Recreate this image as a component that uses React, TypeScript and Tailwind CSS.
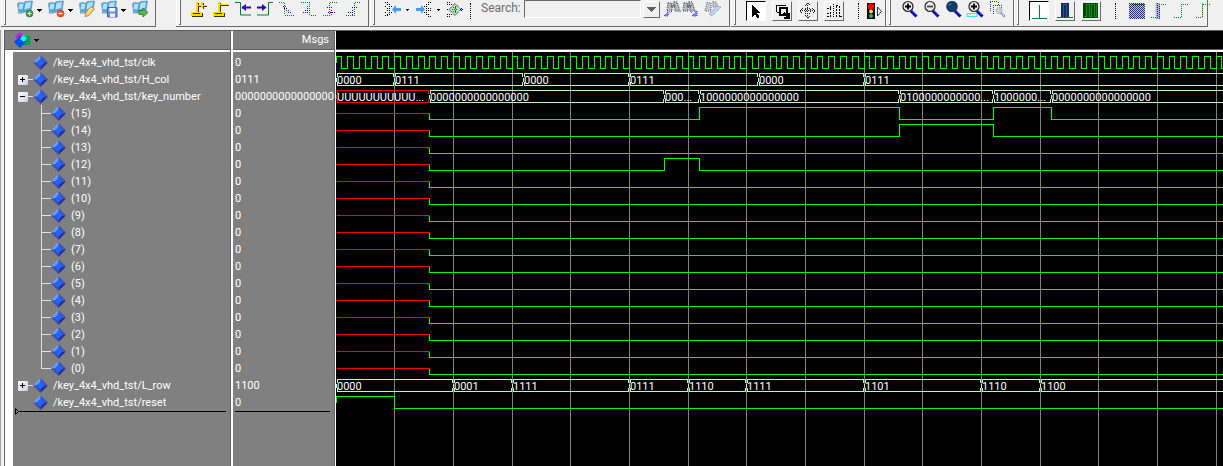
import { useState, type ReactNode } from 'react';
import clsx from 'clsx';

type Level = '0' | '1' | 'U';

interface Signal {
  name: string;
  value: string;
  kind: 'clock' | 'bus' | 'bit';
  depth?: number;
  expander?: '+' | '-';
  // [time, value] pairs, in simulation time units
  changes: [number, string][];
}

const ROW_HEIGHT = 17;
const END_TIME = 4000;

// 3 grid lines every 176px
const toX = (time: number) => Math.floor((time * 176) / 300) + 0.5;

const bitChanges: Record<number, [number, Level][]> = {
  15: [[0, 'U'], [160, '0'], [620, '1'], [960, '0'], [1120, '1'], [1220, '0']],
  14: [[0, 'U'], [160, '0'], [960, '1'], [1120, '0']],
  12: [[0, 'U'], [160, '0'], [560, '1'], [620, '0']],
};

const bits: Signal[] = Array.from({ length: 16 }, (_, i) => 15 - i).map(n => ({
  name: `(${n})`,
  value: '0',
  kind: 'bit',
  depth: 1,
  changes: bitChanges[n] || [[0, 'U'], [160, '0']],
}));

const signals: Signal[] = [
  { name: '/key_4x4_vhd_tst/clk', value: '0', kind: 'clock', changes: [] },
  {
    name: '/key_4x4_vhd_tst/H_col',
    value: '0111',
    kind: 'bus',
    expander: '+',
    changes: [[0, '0000'], [100, '0111'], [320, '0000'], [500, '0111'], [720, '0000'], [900, '0111']],
  },
  {
    name: '/key_4x4_vhd_tst/key_number',
    value: '0000000000000000',
    kind: 'bus',
    expander: '-',
    changes: [
      [0, 'UUUUUUUUUUU...'],
      [160, '0000000000000000'],
      [560, '000...'],
      [620, '1000000000000000'],
      [960, '0100000000000...'],
      [1120, '1000000...'],
      [1220, '0000000000000000'],
    ],
  },
  ...bits,
  {
    name: '/key_4x4_vhd_tst/L_row',
    value: '1100',
    kind: 'bus',
    expander: '+',
    changes: [
      [0, '0000'], [200, '0001'], [300, '1111'], [500, '0111'], [600, '1110'],
      [700, '1111'], [900, '1101'], [1100, '1110'], [1200, '1100'],
    ],
  },
  { name: '/key_4x4_vhd_tst/reset', value: '0', kind: 'bit', changes: [[0, '1'], [100, '0']] },
];

/* ---------- waveforms ---------- */

function ClockTrace({ top }: { top: number }) {
  let d = `M0.5 ${top + 6}V${top}`;
  for (let t = 0; t < END_TIME; t += 20) {
    d += `H${toX(t + 10)}V${top + 12}H${toX(t + 20)}V${top}`;
  }
  return <path d={d} stroke="#00ff00" fill="none" />;
}

function BitTrace({ top, changes }: { top: number; changes: [number, string][] }) {
  const levelY: Record<string, number> = { '1': top, U: top + 6, '0': top + 12 };
  return (
    <>
      {changes.map(([time, level], i) => {
        const end = changes[i + 1]?.[0] ?? END_TIME;
        const from = i > 0 ? levelY[changes[i - 1][1]] : top + 6;
        return (
          <path
            key={time}
            d={`M${toX(time)} ${from}V${levelY[level]}H${toX(end)}`}
            stroke={level === 'U' ? '#ff0000' : '#00ff00'}
            fill="none"
          />
        );
      })}
    </>
  );
}

function BusTrace({ top, changes }: { top: number; changes: [number, string][] }) {
  return (
    <>
      {changes.map(([time, value], i) => {
        const x = toX(time);
        const end = toX(changes[i + 1]?.[0] ?? END_TIME);
        return (
          <g key={time}>
            <path
              d={`M${x} ${top + 4}v4M${x + 1} ${top + 3.5}V${top}H${end - 1}v3.5M${x + 1} ${top + 8.5}V${top + 12}H${end - 1}v-3.5`}
              stroke={value[0] === 'U' ? '#ff0000' : '#b4ffb4'}
              fill="none"
            />
            <text x={x + 0.5} y={top + 10.5} fill="#ffffff" fontSize="11">
              {value}
            </text>
          </g>
        );
      })}
    </>
  );
}

function WavePane() {
  return (
    <svg className="block h-full w-full" shapeRendering="crispEdges" role="img" aria-label="Waveforms">
      {Array.from({ length: END_TIME / 100 }, (_, i) => (
        <rect key={i} x={toX((i + 1) * 100) - 0.5} y="0" width="1" height="100%" fill="#808080" />
      ))}
      {signals.map((signal, i) => {
        const top = 4.5 + i * ROW_HEIGHT;
        if (signal.kind === 'clock') return <ClockTrace key={signal.name} top={top} />;
        if (signal.kind === 'bus') return <BusTrace key={signal.name} top={top} changes={signal.changes} />;
        return <BitTrace key={signal.name} top={top} changes={signal.changes} />;
      })}
    </svg>
  );
}

/* ---------- signal tree ---------- */

function Diamond() {
  return (
    <svg className="h-[15px] w-[15px] shrink-0" viewBox="0 0 15 15">
      <path d="M7.5 0L0 7.5h7.5z" fill="#6f9cf0" />
      <path d="M7.5 0L15 7.5H7.5z" fill="#3a55c4" />
      <path d="M0 7.5L7.5 15V7.5z" fill="#3c50b4" />
      <path d="M15 7.5L7.5 15V7.5z" fill="#2a2a9c" />
      <path d="M7.5 3.5l4 4-4 4-4-4z" fill="#1f66ff" />
    </svg>
  );
}

function SignalRow({ signal, isLast }: { signal: Signal; isLast: boolean }) {
  const [sign, setSign] = useState(signal.expander);

  if (signal.depth) {
    return (
      <li className="flex h-[17px] items-center pl-7">
        <span className="flex h-full w-[10px] shrink-0 flex-col">
          <span className="h-[9px] w-full border-b border-l border-[#e0e0e0]" />
          <span className={clsx('w-full flex-1', !isLast && 'border-l border-[#e0e0e0]')} />
        </span>
        <Diamond />
        <span className="pl-[5px]">{signal.name}</span>
      </li>
    );
  }
  return (
    <li className="flex h-[17px] items-center pl-[5px]">
      {sign ? (
        <>
          <button
            aria-label={`Toggle ${signal.name}`}
            onClick={() => setSign(sign === '+' ? '-' : '+')}
            className="flex h-[10px] w-[10px] items-center justify-center rounded-[1px] bg-gradient-to-br from-white to-[#c4cfe4]"
          >
            <svg className="h-[6px] w-[6px]" viewBox="0 0 6 6" shapeRendering="crispEdges">
              <path d={sign === '+' ? 'M0 2h5v1H0zM2 0h1v5H2z' : 'M0 2h5v1H0z'} fill="#000" />
            </svg>
          </button>
          <span className="h-px w-[5px] bg-[#e0e0e0]" />
        </>
      ) : (
        <span className="w-[15px]" />
      )}
      <Diamond />
      <span className="pl-[5px]">{signal.name}</span>
    </li>
  );
}

/* ---------- toolbar ---------- */

interface IconProps {
  label: string;
  width?: string;
  children: ReactNode;
}

function ToolIcon({ label, width = 'w-4', children }: IconProps) {
  return (
    <button aria-label={label} className={clsx('h-5 shrink-0', width)}>
      <svg className="h-5 w-4 overflow-visible" viewBox="0 0 16 20">
        {children}
      </svg>
    </button>
  );
}

function BoxIcon({ label, pressed, children }: { label: string; pressed?: boolean; children: ReactNode }) {
  return (
    <button
      aria-label={label}
      aria-pressed={!!pressed}
      className={clsx(
        'mt-px h-5 w-5 shrink-0 border',
        pressed
          ? 'border-t-black border-l-black border-r-white border-b-white bg-white'
          : 'border-t-white border-l-white border-r-[#696969] border-b-[#696969] bg-[#f0f0f0]'
      )}
    >
      <svg className="h-[18px] w-[18px]" viewBox="0 0 18 18" shapeRendering="crispEdges">
        {children}
      </svg>
    </button>
  );
}

function Caret({ small }: { small?: boolean }) {
  return (
    <svg className="h-5 w-[5px] shrink-0" viewBox="0 0 5 20" shapeRendering="crispEdges">
      <path d={small ? 'M1 9h3v1H1zM2 10h1v1H2z' : 'M0 9h5v1H0zM1 10h3v1H1zM2 11h1v1H2z'} fill="#000" />
    </svg>
  );
}

function Separator() {
  return <span className="mt-[3px] h-4 w-0 shrink-0 border-l border-dotted border-black" />;
}

function Group({ width, children }: { width: string; children: ReactNode }) {
  return (
    <div className={clsx('flex h-[27px] shrink-0 border-r border-b border-[#696969]', width)}>
      <span className="h-[25px] w-[5px] shrink-0 border-l border-white">
        <span className="ml-[2px] block h-full w-[2px] border-r border-b border-[#696969] bg-white" />
      </span>
      {children}
    </div>
  );
}

function BookBase() {
  return (
    <>
      <path d="M0.5 3.500l2-1 4 .5 2-1.500 7-.5-1.500 9.500-5 1-2 1-5.500-1z" fill="#4aa8e8" stroke="#6c98b8" strokeWidth="0.800" />
      <path d="M2.500 3.500l4 .5-1 5.500-4-.5zM8 3l6-1-1 6-6 1.500z" fill="#b0e2fc" />
      <path d="M8 3L6.500 10M2 11.500l-1 1.500h5" stroke="#5e7f96" strokeWidth="0.800" fill="none" />
    </>
  );
}

function Magnifier({ children }: { children?: ReactNode }) {
  return (
    <>
      <path d="M10 11l5.500 5.500" stroke="#0000c0" strokeWidth="3" />
      <path d="M10.500 10l5 5" stroke="#8090d0" strokeWidth="0.8" />
      <circle cx="7" cy="6.500" r="5" fill="#ececec" stroke="#202020" strokeWidth="1.200" />
      {children}
    </>
  );
}

const dotted = { fill: 'none', strokeDasharray: '1 1', shapeRendering: 'crispEdges' as const };

function FileTools() {
  return (
    <Group width="w-[155px]">
      <div className="flex pl-[11px]">
        <ToolIcon label="Add bookmark">
          <BookBase />
          <circle cx="12.500" cy="13.500" r="3.500" fill="#3f9a3a" stroke="#2c6e2a" strokeWidth="0.600" />
          <path d="M10.500 13.500h4M12.500 11.500v4" stroke="#fff" strokeWidth="1.200" />
        </ToolIcon>
        <span className="w-1" />
        <Caret />
        <span className="w-1.5" />
        <ToolIcon label="Delete bookmark">
          <BookBase />
          <circle cx="12.500" cy="13.500" r="3.500" fill="#e0561a" stroke="#b83c10" strokeWidth="0.600" />
          <path d="M10.500 13.500h4" stroke="#fff" strokeWidth="1.400" />
        </ToolIcon>
        <span className="w-1" />
        <Caret />
        <span className="w-1.5" />
        <ToolIcon label="Edit bookmark">
          <BookBase />
          <path d="M6 16.500l1-4.500 5-5.500 3.500 2.500-5.500 6.500z" fill="#f4cf7a" stroke="#b8842c" strokeWidth="0.900" />
          <path d="M8.500 12.500l4.500-4.500" stroke="#fff2c4" />
        </ToolIcon>
        <span className="w-1.5" />
        <ToolIcon label="Save bookmarks">
          <BookBase />
          <path d="M6.500 7.500h9.500v9.500H6.500z" fill="#6c90dc" stroke="#3c5ca8" strokeWidth="0.900" />
          <path d="M8.500 8h5.500v3.500H8.500z" fill="#fff" />
          <path d="M9 13.500h5V17H9z" fill="#eef3fc" />
        </ToolIcon>
        <span className="w-1" />
        <Caret />
        <span className="w-1.5" />
        <ToolIcon label="Go to bookmark">
          <BookBase />
          <path d="M7 10.500h4V8l5 4.500-5 4.500v-2.500H7z" fill="#5cb84c" stroke="#2c7c28" strokeWidth="0.900" />
        </ToolIcon>
      </div>
    </Group>
  );
}

function CursorTools() {
  return (
    <Group width="w-[193px]">
      <div className="flex gap-1.5 pl-[10px]">
        <ToolIcon label="Insert cursor">
          <g shapeRendering="crispEdges">
            <path d="M6 3h2v10H6zM8 6h8v1H8zM12 3h1v6h-1zM1 13h11v4H1z" fill="#403000" />
            <path d="M5 2h2v10H5zM7 5h8v1H7zM10 2h2v6h-2zM0 12h11v4H0z" fill="#ffd800" />
            <path d="M2 13h7v1H2z" fill="#403000" />
          </g>
        </ToolIcon>
        <ToolIcon label="Delete cursor">
          <g shapeRendering="crispEdges">
            <path d="M6 3h2v10H6zM8 5h8v1H8zM1 13h11v4H1z" fill="#403000" />
            <path d="M5 2h2v10H5zM7 4h8v1H7zM0 12h11v4H0z" fill="#ffd800" />
            <path d="M2 13h7v1H2z" fill="#403000" />
          </g>
        </ToolIcon>
        <ToolIcon label="Find previous transition">
          <path d="M0 2.500h5.500v12.500H16" stroke="#008030" fill="none" />
          <path d="M7 7.500h9" stroke="#3000c0" strokeWidth="2" />
          <path d="M11 4v7L6.500 7.500z" fill="#3000c0" />
        </ToolIcon>
        <ToolIcon label="Find next transition">
          <path d="M0 15h11.500V2.500H16" stroke="#008030" fill="none" />
          <path d="M0 7.500h8" stroke="#3000c0" strokeWidth="2" />
          <path d="M5 4v7l4.500-3.500z" fill="#3000c0" />
        </ToolIcon>
        <ToolIcon label="Find previous falling edge">
          <path d="M0 2.500h5.500v12.500H16" stroke="#008030" {...dotted} />
          <path d="M4 6.500h3M5 8.500h4M7 10.500h4M9 12.500h3" stroke="#3000c0" {...dotted} />
        </ToolIcon>
        <ToolIcon label="Find next falling edge">
          <path d="M0 2.500h8.500v12.500H16" stroke="#008030" {...dotted} />
          <path d="M2 12.500h6M6.500 6v8M4 10.500h4" stroke="#3000c0" {...dotted} />
        </ToolIcon>
        <ToolIcon label="Find previous rising edge">
          <path d="M0 15.500h6.500V2.500H14" stroke="#008030" {...dotted} />
          <path d="M4 7.500h6M5 12.500h8M8.500 10v5" stroke="#3000c0" {...dotted} />
        </ToolIcon>
        <ToolIcon label="Find next rising edge">
          <path d="M1 15.500h8.500V2.500H15" stroke="#008030" {...dotted} />
          <path d="M7 7.500h6M3 12.500h6M7.500 10v5" stroke="#3000c0" {...dotted} />
        </ToolIcon>
      </div>
    </Group>
  );
}

function SearchTools() {
  const [query, setQuery] = useState('');
  return (
    <Group width="w-[360px]">
      <div className="flex min-w-0 flex-1 pl-[10px]">
        <ToolIcon label="Collapse left">
          <path
            d="M0 2.500h3M2 4.500h4M4 6.500h4M0 6.500h2M2 8.500h4M2 10.500h4M0 12.500h2M4 12.500h4M2 14.500h4M0 15.500h3"
            stroke="#000"
            {...dotted}
          />
          <path d="M7 9.500L11 5v3h5v3h-5v3z" fill="#2a8cf4" opacity="0.85" />
        </ToolIcon>
        <span className="w-1" />
        <Caret small />
        <span className="w-1.5" />
        <ToolIcon label="Collapse right">
          <path d="M9 9.500L5 5v3H0v3h5v3z" fill="#2a8cf4" opacity="0.85" />
          <path
            d="M12 2.500h4M10 4.500h3M8 6.500h4M10 8.500h5M10 10.500h5M8 12.500h4M10 14.500h3M12 16.500h4"
            stroke="#000"
            {...dotted}
          />
        </ToolIcon>
        <span className="w-1" />
        <Caret small />
        <span className="w-1.5" />
        <ToolIcon label="Expand">
          <path d="M0 2.500h4M0 4.500h5M0 9.500h4M0 14.500h5M0 16.500h4" stroke="#000" {...dotted} />
          <path d="M8 3.500l6 6-6 6-6-6z" stroke="#000" strokeDasharray="1 1" fill="#c4dcc4" />
          <path d="M5 9.500h6M6 7.500h4M6 11.500h4M8.500 6v7" stroke="#008000" {...dotted} />
          <path d="M13 9.500h4M14.500 8v4" stroke="#0000ff" {...dotted} />
        </ToolIcon>
        <span className="w-[7px]" />
        <Separator />
        <label htmlFor="search" className="w-[53px] shrink-0 pl-[10px] text-xs leading-4 text-[#6d6d6d]">
          Search:
        </label>
        <input
          id="search"
          value={query}
          onChange={e => setQuery(e.target.value)}
          className="h-[18px] min-w-0 flex-1 border-t border-r border-b border-l border-t-[#696969] border-r-white border-b-white border-l-[#696969] bg-[#f0f0f0] px-1 outline-none"
        />
        <button
          aria-label="Search history"
          className="mt-px ml-0.5 h-[17px] w-[17px] shrink-0 border border-t-white border-l-white border-r-[#696969] border-b-[#696969]"
        >
          <svg className="h-[15px] w-[15px]" viewBox="0 0 15 15" shapeRendering="crispEdges">
            <path d="M3 5h9v1H3zM4 6h7v1H4zM5 7h5v1H5zM6 8h3v1H6zM7 9h1v1H7z" fill="#606060" />
          </svg>
        </button>
        <div className="flex gap-0.5 pr-[8px] pl-1">
          <ToolIcon label="Search reverse">
            <path d="M4 3h4v8H3zM10 2h3l3 9h-5zM7 5h4v2H7z" stroke="#606870" strokeWidth="1.500" strokeDasharray="1 1" fill="#b8bcc0" />
            <path d="M8 11l-4 4M4 12v4H0z" stroke="#3030ff" strokeDasharray="1 1" fill="#8888ff" />
          </ToolIcon>
          <ToolIcon label="Search forward">
            <path d="M2 3h4v8H1zM7 2h3l3 9H8zM5 5h4v2H5z" stroke="#606870" strokeWidth="1.500" strokeDasharray="1 1" fill="#b8bcc0" />
            <path d="M8 11l4 4M15 11v5h-5z" stroke="#3030ff" strokeDasharray="1 1" fill="#8888ff" />
          </ToolIcon>
          <span className="w-[3px]" />
          <ToolIcon label="Search options">
            <path d="M2 3h4v8H0zM8 2h3l2 5H8z" stroke="#808890" strokeWidth="1.500" strokeDasharray="1 1" fill="#c8ccd0" />
            <path d="M4 14l8-8 4 1-9 9z" stroke="#7090c8" strokeDasharray="1 1" fill="#c0d4f0" />
          </ToolIcon>
        </div>
      </div>
    </Group>
  );
}

function ModeTools() {
  return (
    <Group width="w-[155px]">
      <div className="flex gap-1.5 pl-[10px]">
        <BoxIcon label="Select mode" pressed>
          <path d="M5 3v12l3-3 2 4h2v-2l-2-3h4z" fill="#000" />
        </BoxIcon>
        <BoxIcon label="Zoom mode">
          <path d="M3.500 10V3.500h9M3.500 10.500h3" stroke="#000" fill="none" />
          <path d="M7 6h7v7H7z" stroke="#000" strokeWidth="2" fill="none" />
          <path d="M11 11l5 5M16 11v5h-5" stroke="#000" strokeWidth="1.500" fill="none" />
        </BoxIcon>
        <BoxIcon label="Pan mode">
          <path
            d="M8.500 1v15M1 8.500h15M6 4l3-3 3 3M6 13l3 3 3-3M4 6L1 9l3 3M13 6l3 3-3 3M6 6h5v5H6z"
            stroke="#202020"
            {...dotted}
          />
        </BoxIcon>
        <BoxIcon label="Edit mode">
          <path d="M2 6.500h4M2 11.500h4M5.500 4v4M5.500 10v4M2 14.500h4M11 3.500h3v11h3M11 3.500v11" stroke="#000" fill="none" strokeDasharray="2 1" />
          <path d="M8.500 2v14" stroke="#000" {...dotted} />
        </BoxIcon>
        <span className="w-0.5" />
        <Separator />
        <ToolIcon label="Stop drawing">
          <path d="M2 3h8v16H2z" fill="#000" />
          <circle cx="6" cy="6.500" r="3.300" fill="#ff0000" />
          <circle cx="6" cy="11.500" r="2" fill="#f0e020" />
          <circle cx="6" cy="16" r="2" fill="#20c040" />
          <path d="M12.500 7v9l4-4.500z" fill="#fff" stroke="#203050" />
        </ToolIcon>
      </div>
    </Group>
  );
}

function ZoomTools() {
  return (
    <Group width="w-[128px]">
      <div className="flex gap-1.5 pl-[10px]">
        <ToolIcon label="Zoom in">
          <Magnifier>
            <path d="M4 6.500h6M7 3.500v6" stroke="#000" strokeWidth="1.800" />
          </Magnifier>
        </ToolIcon>
        <ToolIcon label="Zoom out">
          <Magnifier>
            <path d="M4 6.500h6" stroke="#404040" strokeWidth="1.800" />
          </Magnifier>
        </ToolIcon>
        <ToolIcon label="Zoom full">
          <Magnifier>
            <circle cx="7" cy="6.500" r="5.500" fill="#0c3c70" />
            <path d="M4 5.500l2-2" stroke="#80b8e0" />
          </Magnifier>
        </ToolIcon>
        <ToolIcon label="Zoom on cursor">
          <path d="M0 13.500h10v3H0z" fill="none" stroke="#40e0f0" />
          <Magnifier>
            <path d="M4 6.500h6M7 3.500v6" stroke="#000" strokeWidth="1.800" />
          </Magnifier>
        </ToolIcon>
        <ToolIcon label="Zoom range">
          <path d="M1 1.500h8M1.500 2v10M9.500 2v3M4 5.500h8M4.500 5v9M12.500 5v5" stroke="#1830a0" {...dotted} />
          <circle cx="10" cy="10.500" r="3" fill="#d0d0d0" stroke="#909090" strokeDasharray="1 1" />
          <path d="M12 13l4 4" stroke="#4060b0" strokeDasharray="1 1" strokeWidth="2" />
        </ToolIcon>
      </div>
    </Group>
  );
}

function ViewTools() {
  return (
    <Group width="w-[194px]">
      <div className="flex gap-1.5 pl-[10px]">
        <BoxIcon label="Event view" pressed>
          <path d="M2 16.500h15M9.500 3v13" stroke="#008030" fill="none" />
        </BoxIcon>
        <BoxIcon label="Logic view">
          <path d="M5 1h8v15H5z" fill="#20207c" />
          <path d="M1 15.500h6.500v-13h3v13H17" stroke="#008030" fill="none" />
        </BoxIcon>
        <BoxIcon label="Full view">
          <path d="M1 1h15v15H1z" fill="#004800" />
          <path d="M2 14.500h2.500v-12h3v12h2v-12h3v12h2v-12h1" stroke="#009028" fill="none" />
        </BoxIcon>
        <span className="w-0.5" />
        <Separator />
        <span className="w-px" />
        <ToolIcon label="Expand time">
          <rect x="0" y="3" width="16" height="16" fill="#c4c8ec" />
          {Array.from({ length: 8 }, (_, i) => (
            <g key={i}>
              <path d={`M0 ${3.5 + i * 2}h16`} stroke="#202880" {...dotted} />
              <path d={`M1 ${4.5 + i * 2}h15`} stroke="#202880" {...dotted} />
            </g>
          ))}
          <path d="M4 4.500h12" stroke="#008030" {...dotted} />
        </ToolIcon>
        <ToolIcon label="Expand at cursor">
          <path d="M5 3h4v16H5z" fill="#a8b0dc" />
          <path d="M6.500 3v16M8.500 4v15" stroke="#202880" {...dotted} />
          <path d="M4.500 3v16" stroke="#e0d820" {...dotted} />
          <path d="M0 17.500h5M8 4.500h7" stroke="#008030" {...dotted} />
        </ToolIcon>
        <ToolIcon label="Collapse time">
          <path d="M1 17.500h7.500v-13H15" stroke="#008030" {...dotted} />
        </ToolIcon>
        <ToolIcon label="Collapse at cursor">
          <path d="M1 17.500h6M8 4.500h7" stroke="#008030" {...dotted} />
          <path d="M7.500 4v13" stroke="#008030" {...dotted} />
          <path d="M7.500 3v15" stroke="#c8d020" {...dotted} />
        </ToolIcon>
      </div>
    </Group>
  );
}

export default function App() {
  return (
    <div className="flex min-h-screen w-full flex-col overflow-hidden bg-[#f0f0f0] font-[Roboto,'Liberation_Sans',sans-serif] text-[11px] leading-4 text-white">
      <header className="flex h-[30px] shrink-0 overflow-hidden pl-px">
        <FileTools />
        <span className="w-5 shrink-0" />
        <CursorTools />
        <span className="w-px shrink-0" />
        <SearchTools />
        <span className="w-px shrink-0" />
        <ModeTools />
        <ZoomTools />
        <ViewTools />
      </header>

      <main className="flex flex-1 border-l border-[#a0a0a0]">
        <div className="w-[3px] shrink-0 border-r border-white" />
        <div className="flex min-w-0 flex-1 border-t border-l border-[#606060]">
          <section className="flex w-[226px] shrink-0 flex-col border-r border-[#606060]">
            <div className="flex h-[19px] shrink-0 items-center border-b border-[#606060] bg-[#808080]">
              <button aria-label="Object filter" className="flex items-center pl-[9px]">
                <svg className="h-4 w-4" viewBox="0 0 16 16">
                  <path d="M6 0l5 5-5 4-5-4z" fill="#c020e0" />
                  <path d="M9 4h7v9H9z" fill="#00a050" />
                  <path d="M6 4l6 6-6 6-6-6z" fill="#0050f0" />
                  <path d="M9 3l4 3-3 4-4-3z" fill="#20f0ff" />
                </svg>
                <span className="w-1" />
                <Caret />
              </button>
            </div>
            <div className="flex flex-1 border-t-2 border-white">
              <div className="w-2 shrink-0 bg-white" />
              <div className="min-w-0 flex-1 bg-[#808080] pt-0.5">
                <ul>
                  {signals.map((signal, i) => (
                    <SignalRow key={signal.name} signal={signal} isLast={!signals[i + 1]?.depth} />
                  ))}
                </ul>
                <div className="-mt-[3px] flex items-center pr-1 pl-0.5">
                  <svg className="h-[7px] w-1" viewBox="0 0 4 7">
                    <path d="M.5.5v6l3-3z" fill="none" stroke="#000" />
                  </svg>
                  <span className="h-px flex-1 bg-black" />
                </div>
              </div>
            </div>
          </section>

          <section className="flex w-[104px] shrink-0 flex-col border-r border-l-2 border-r-[#606060] border-l-white">
            <div className="h-[19px] shrink-0 border-b border-[#606060] bg-[#808080] pt-px pr-[5px] text-right">
              Msgs
            </div>
            <div className="flex-1 border-t-2 border-white bg-[#808080] pt-0.5">
              <ul>
                {signals.map(signal => (
                  <li key={signal.name} className="flex h-[17px] items-center pl-0.5">
                    {signal.value}
                  </li>
                ))}
              </ul>
              <div className="mr-1 ml-0.5 h-px bg-black" />
            </div>
          </section>

          <section className="flex min-w-0 flex-1 flex-col border-l border-white bg-black">
            <div className="h-[19px] shrink-0 border-b border-[#606060]" />
            <div className="relative min-h-0 flex-1 border-t-2 border-white">
              <div className="absolute inset-0">
                <WavePane />
              </div>
            </div>
          </section>
        </div>
      </main>
    </div>
  );
}
